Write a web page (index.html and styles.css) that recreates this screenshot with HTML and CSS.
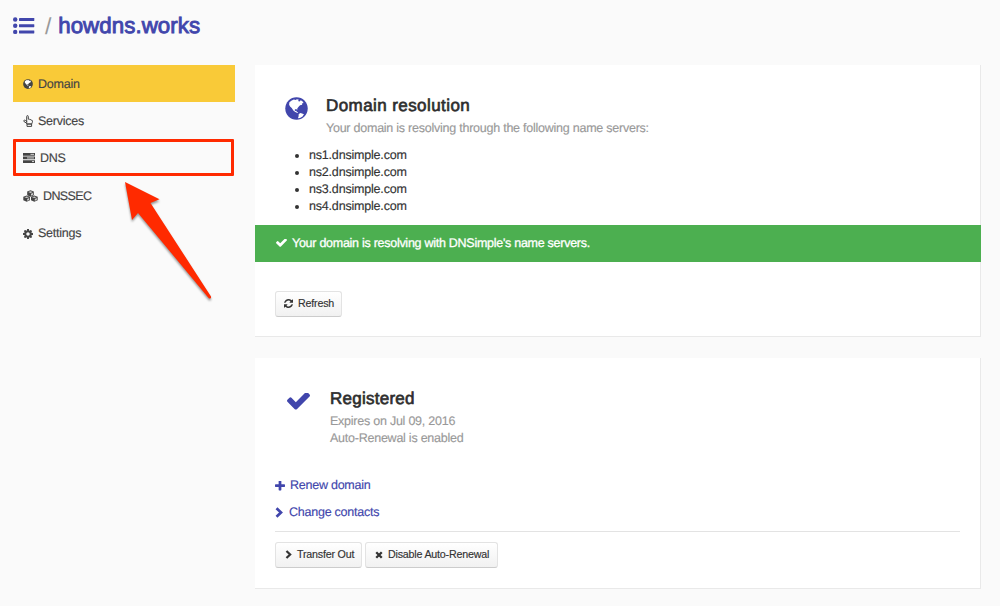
FILE: index.html
```html
<!DOCTYPE html>
<html lang="en">
<head>
<meta charset="utf-8">
<title>howdns.works</title>
<link rel="stylesheet" href="styles.css">
</head>
<body>
<svg class="defs" width="0" height="0">
  <symbol id="globe" viewBox="0 0 24 24">
    <circle cx="12" cy="12" r="11.700" fill="currentColor"/>
    <path class="land" d="M4.600 5.600 7 3.600 9.300 2.600 11 3.100 12.500 2.300 14.500 2.900 13.600 4.200 15.200 4.700 16.400 3.400 18.200 4.400 19.400 6.300 17.600 6.800 18 8.200 15.700 8.700 14.200 10.300 12.800 12 12.900 13.200 11.300 12.500 10.200 13.200 10.400 14.500 11.900 14.300 12.200 15.500 13.700 16.200 13 16.800 10.700 15.600 8.700 14 7 11.500 5.300 10 4.300 8zM14.300 17.800 16.200 16.600 18.500 17.600 19.800 18.100 18.300 20.300 15.600 21.800 13.500 22.200 14.200 20.200z"/>
  </symbol>
  <symbol id="check" viewBox="120 430 1552 1092"><path fill="currentColor" d="M1671 566q0 40-28 68l-724 724-136 136q-28 28-68 28t-68-28l-136-136-362-362q-28-28-28-68t28-68l136-136q28-28 68-28t68 28l294 295 656-657q28-28 68-28t68 28l136 136q28 28 28 68z"/></symbol>
  <symbol id="cog" viewBox="128 128 1536 1536"><path fill="currentColor" d="M1152 896q0-106-75-181t-181-75-181 75-75 181 75 181 181 75 181-75 75-181zm512-109v222q0 12-8 23t-20 13l-185 28q-19 54-39 91 35 50 107 138 10 12 10 25t-9 23q-27 37-99 108t-94 71q-12 0-26-9l-138-108q-44 23-91 38-16 136-29 186-7 28-36 28h-222q-14 0-24.500-8.500t-11.500-21.500l-28-184q-49-16-90-37l-141 107q-10 9-25 9-14 0-25-11-126-114-165-168-7-10-7-23 0-12 8-23 15-21 51-66.500t54-70.500q-27-50-41-99l-183-27q-13-2-21-12.500t-8-23.500v-222q0-12 8-23t19-13l186-28q14-46 39-92-40-57-107-138-10-12-10-24 0-10 9-23 26-36 98.500-107.500t94.500-71.500q13 0 26 10l138 107q44-23 91-38 16-136 29-186 7-28 36-28h222q14 0 24.500 8.500t11.500 21.500l28 184q49 16 90 37l142-107q9-9 24-9 13 0 25 10 129 119 165 170 7 8 7 22 0 12-8 23-15 21-51 66.500t-54 70.500q26 50 41 98l183 28q13 2 21 12.500t8 23.500z"/></symbol>
  <symbol id="refresh" viewBox="128 128 1536 1536"><path fill="currentColor" d="M1639 1056q0 5-1 7-64 268-268 434.500t-478 166.500q-146 0-282.500-55t-243.500-157l-129 129q-19 19-45 19t-45-19-19-45v-448q0-26 19-45t45-19h448q26 0 45 19t19 45-19 45l-137 137q71 66 161 102t187 36q134 0 250-65t186-179q11-17 53-117 8-23 30-23h192q13 0 22.500 9.500t9.500 22.500zm25-800v448q0 26-19 45t-45 19h-448q-26 0-45-19t-19-45 19-45l138-138q-148-137-349-137-134 0-250 65t-186 179q-11 17-53 117-8 23-30 23h-199q-13 0-22.500-9.500t-9.500-22.500v-7q65-268 270-434.500t480-166.500q146 0 284 55.500t245 156.500l130-129q19-19 45-19t45 19 19 45z"/></symbol>
  <symbol id="plus" viewBox="192 192 1408 1408"><path fill="currentColor" d="M1600 736v192q0 40-28 68t-68 28h-416v416q0 40-28 68t-68 28h-192q-40 0-68-28t-28-68v-416h-416q-40 0-68-28t-28-68v-192q0-40 28-68t68-28h416v-416q0-40 28-68t68-28h192q40 0 68 28t28 68v416h416q40 0 68 28t28 68z"/></symbol>
  <symbol id="chevron" viewBox="0 0 8 11"><path d="M1.500 1.200 6 5.500 1.500 9.800" fill="none" stroke="currentColor" stroke-width="2.700"/></symbol>
  <symbol id="times" viewBox="0 0 9 9"><path d="M1.400 1.400 7.600 7.600M7.600 1.400 1.400 7.600" fill="none" stroke="currentColor" stroke-width="2.600"/></symbol>
</svg>

<header class="title">
  <svg class="list-icon" viewBox="0 0 22 18" fill="currentColor">
    <circle cx="2.200" cy="2.500" r="2.200"/><circle cx="2.200" cy="8.700" r="2.200"/><circle cx="2.200" cy="14.900" r="2.200"/>
    <rect x="6" y="1" width="15.300" height="3" rx=".4"/><rect x="6" y="7.200" width="15.300" height="3" rx=".4"/><rect x="6" y="13.400" width="15.300" height="3" rx=".4"/>
  </svg>
  <span class="slash">/</span>
  <h1>howdns.works</h1>
</header>

<div class="layout">
  <nav class="menu">
    <a class="item active"><svg width="10" height="10"><use href="#globe"/></svg>Domain</a>
    <a class="item"><svg width="10" height="12" viewBox="0 0 10 12" fill="none" stroke="currentColor" stroke-width="1" stroke-linejoin="round"><path d="M3.700 7.600V1.500Q3.700.6 4.500.6t.8.9v2.700Q6.500 3.600 6.900 4.700 8 4.200 8.300 5.200 9.500 5 9.500 6.200 9.500 7.500 8.600 9H4Q3.500 7.900 1 6.500.2 5.600 1.200 5.200 2.200 5 3.700 6.300zM4 9v2.400h4.600V9z"/></svg>Services</a>
    <a class="item marked"><svg width="12" height="10" viewBox="0 0 12 10"><path fill="currentColor" d="M0 0h12v2.700H0zM0 3.600h12v2.700H0zM0 7.200h12v2.700H0z"/><path class="slot" d="M7.500 1.350H11M4 4.950h7M9 8.550h2"/></svg>DNS</a>
    <a class="item dnssec"><svg width="15" height="12" viewBox="0 0 15 12"><g fill="currentColor"><path d="M7.500.2 10.800 1.500v3.700L7.500 6.800 4.200 5.200V1.500z"/><path d="M3.700 5.400 7 6.700v3.600l-3.300 1.500L.3 10.300V6.700z"/><path d="M11.300 5.400 14.700 6.700v3.600l-3.400 1.500L8 10.300V6.700z"/></g><path class="facet" d="M5.200 2l2.300.9L9.800 2 7.500 1.200zM8 3.700l2-.8v1.900l-2 .9zM1.400 7.200l2.300.9L6 7.200l-2.300-.8zM4.200 8.900l2-.8v1.800l-2 .9zM9 7.200l2.300.9 2.300-.9-2.300-.8zM11.800 8.900l2-.8v1.800l-2 .9z"/></svg>DNSSEC</a>
    <a class="item"><svg width="10" height="10"><use href="#cog"/></svg>Settings</a>
    <svg class="arrow" width="100" height="130" viewBox="0 0 100 130"><path fill="#ff2a00" d="M5 2 39.500 19.300 30.500 23 91 116.500Q91.500 119 88.800 118.200L18 33 12 40z"/></svg>
  </nav>

  <main class="content">
    <section class="card">
      <div class="head resolve">
        <svg width="23" height="23"><use href="#globe"/></svg>
        <div><h2>Domain resolution</h2><p>Your domain is resolving through the following name servers:</p></div>
      </div>
      <ul class="servers"><li>ns1.dnsimple.com</li><li>ns2.dnsimple.com</li><li>ns3.dnsimple.com</li><li>ns4.dnsimple.com</li></ul>
      <div class="notice"><svg width="11" height="8"><use href="#check"/></svg><span>Your domain is resolving with DNSimple's name servers.</span></div>
      <div class="refresh"><button class="btn"><svg width="9" height="9"><use href="#refresh"/></svg>Refresh</button></div>
    </section>

    <section class="card second">
      <div class="head registered">
        <svg width="23" height="17"><use href="#check"/></svg>
        <div><h2>Registered</h2><p>Expires on Jul 09, 2016</p><p>Auto-Renewal is enabled</p></div>
      </div>
      <div class="links">
        <a><svg width="10" height="10"><use href="#plus"/></svg>Renew domain</a>
        <a class="contacts"><svg width="8" height="11"><use href="#chevron"/></svg>Change contacts</a>
      </div>
      <div class="actions">
        <button class="btn transfer"><svg width="7" height="9"><use href="#chevron"/></svg>Transfer Out</button>
        <button class="btn disable"><svg width="8" height="8"><use href="#times"/></svg>Disable Auto-Renewal</button>
      </div>
    </section>
  </main>
</div>
</body>
</html>
```

FILE: styles.css
```css
* { box-sizing: border-box; }
body {
  margin: 0;
  height: 606px;
  overflow: hidden;
  padding: 12px 19px 0 13px;
  background: #fafafa;
  color: #333;
  font: 12.5px/17px "Liberation Sans", Arial, sans-serif;
  letter-spacing: -.24px;
  text-rendering: geometricPrecision;
}
svg { flex: none; display: block; }
.defs { position: absolute; }
h1, h2, p, ul { margin: 0; }
.land { fill: #fff; }

.title { display: flex; align-items: center; height: 28px; color: #4146ac; }
.list-icon { width: 22px; height: 18px; }
.slash { margin: 0 7px 0 10px; color: #999; font-size: 23px; line-height: 28px; }
h1 { font-size: 22.3px; font-weight: 400; line-height: 28px; letter-spacing: .07px; -webkit-text-stroke: .9px; }

.layout { display: flex; gap: 20px; margin-top: 25px; }
.menu { position: relative; width: 222px; flex: none; }
.item { display: flex; align-items: center; gap: 5px; height: 37px; margin-bottom: .4px; padding: 1px 0 0 10px; color: #444; -webkit-text-stroke: .15px; }
.active { background: #f9ca38; }
.active .land { fill: #f9ca38; }
.marked { width: 221px; margin: -.8px 0 1.200px; padding: 2px 0 0 7px; border: 3px solid #ff2a00; border-radius: 1px; }
.dnssec { letter-spacing: -.6px; }
.slot { stroke: #fafafa; stroke-width: .8; }
.facet { fill: #fafafa; opacity: .75; }
.arrow { position: absolute; left: 107px; top: 115px; filter: drop-shadow(0 2px 1px rgba(0, 0, 0, .4)); }

.content { flex: 1; }
.card { height: 272px; background: #fff; border-right: 1px solid #e9e9e9; border-bottom: 1px solid #e9e9e9; }
.head { display: flex; color: #999; -webkit-text-stroke: .15px; }
.head > svg { color: #4146ac; }
h2 { margin-bottom: 3px; color: #2d2d2d; font-size: 17px; font-weight: 400; line-height: 22px; letter-spacing: .42px; -webkit-text-stroke: .65px; }
.resolve { padding: 30px 0 0 30px; height: 82px; gap: 18px; }
.resolve > svg { margin-top: 2px; }
.servers { padding-left: 54px; height: 77.500px; -webkit-text-stroke: .15px; letter-spacing: -.19px; }
.notice { display: flex; align-items: center; gap: 5px; height: 37.500px; margin-right: -1px; padding-left: 21px; background: #4caf50; color: #fff; letter-spacing: -.27px; -webkit-text-stroke: .3px #fff; }
.refresh { padding: 29px 20px 0; }
.btn { display: inline-flex; align-items: center; justify-content: flex-start; gap: 5px; width: 67px; height: 26px; padding: 0 0 1px 9px; border: 1px solid #e3e3e3; border-bottom-color: #ccc; border-radius: 3px; background: linear-gradient(#fff, #f1f1f1); color: #333; font: 10.7px/15px "Liberation Sans", Arial, sans-serif; letter-spacing: -.2px; white-space: nowrap; -webkit-text-stroke: .15px; }
.refresh .btn { padding-left: 8px; }
.transfer { width: 87px; }
.disable { width: 133px; }

.second { height: 231px; margin-top: 21px; }
.registered { padding: 30px 0 0 32px; height: 119px; gap: 20px; }
.registered > svg { margin-top: 5px; }
.registered h2 { letter-spacing: .25px; }
.links { display: flex; flex-direction: column; gap: 10px; margin: 0 20px; height: 55px; border-bottom: 1px solid #e3e3e3; color: #4146ac; -webkit-text-stroke: .15px; }
.links a { display: flex; align-items: center; gap: 5px; }
.links .contacts { gap: 6px; }
.actions { display: flex; gap: 3px; padding: 10px 20px; }
```
